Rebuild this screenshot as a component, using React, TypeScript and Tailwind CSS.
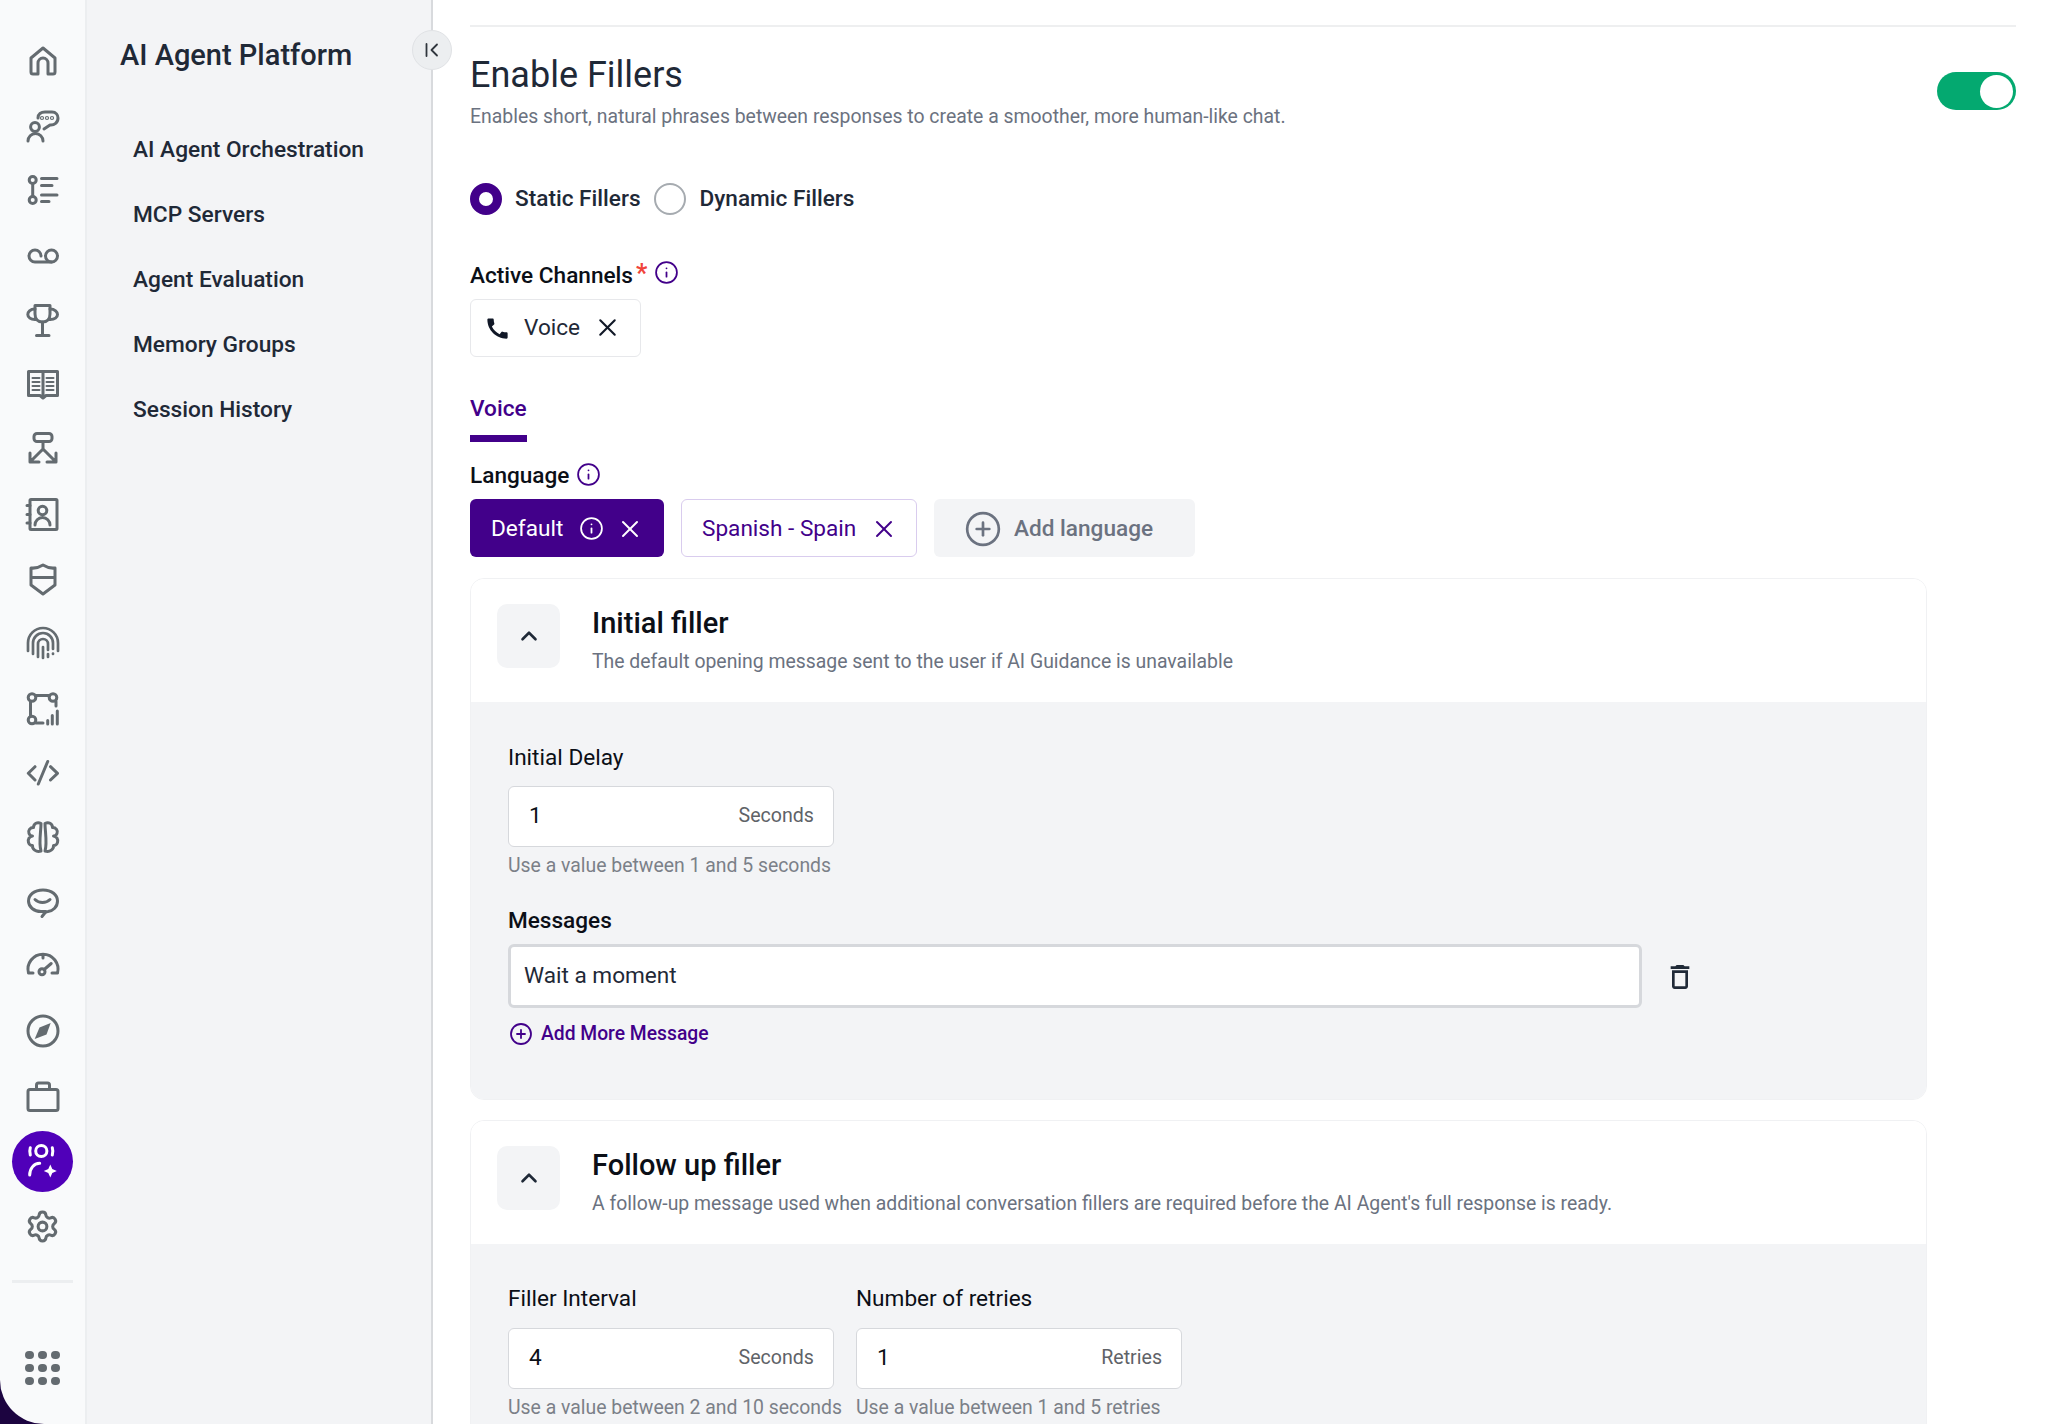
import React from 'react';
import { ChevronUp, CirclePlus, Info, Settings, X } from 'lucide-react';
import { MdCall, MdOutlineDelete } from 'react-icons/md';

const RailSvg = ({ children, stroke = '#646b70' }: { children: React.ReactNode; stroke?: string }) => (
  <svg
    width="32"
    height="32"
    viewBox="0 0 32 32"
    fill="none"
    stroke={stroke}
    strokeWidth="3"
    strokeLinecap="round"
    strokeLinejoin="round"
    style={{ overflow: 'visible' }}
  >
    {children}
  </svg>
);

const railIcons: React.ReactNode[] = [
  <path key="home" d="M4 13 16 3l12 10v14a2 2 0 0 1-2 2h-5V18a5 5 0 0 0-10 0v11H6a2 2 0 0 1-2-2Z" />,
  <g key="agent">
    <circle cx="8" cy="17" r="4.400" />
    <path d="M1 31a7.500 7.500 0 0 1 15 0" />
    <path d="M11 8c0-4 3-6 7-6h7c4 0 6 3 6 6 0 5-4 7-7 7h-1l-6 4" />
    <circle cx="15" cy="8" r="0.600" />
    <circle cx="20" cy="8" r="0.600" />
    <circle cx="25" cy="8" r="0.600" />
  </g>,
  <g key="steps">
    <circle cx="5.700" cy="6" r="3.500" />
    <circle cx="5.700" cy="26" r="3.500" />
    <path d="M5.700 9.500v13M14.500 4.500H30M14.500 11.500H25M14.500 21H30M14.500 27.500H22" />
  </g>,
  <g key="voicemail">
    <circle cx="24.500" cy="17" r="6" />
    <path d="M14 17a6 6 0 1 0-6 6h16.500" />
  </g>,
  <g key="trophy">
    <path d="M8 1.500h15V10c0 5-3 8-7.500 8S8 15 8 10Z" />
    <path d="M8 5C3 5 .8 8 .8 10.500S3.500 16 9 15.500M23 5c5 0 7.500 3 7.500 5.500S28 16 22 15.500M15.500 18v13M9.500 31.500h12.500" />
  </g>,
  <g key="book">
    <path d="M1.500 3.500h29v24H19l-3 2.500-3-2.500H1.500ZM16 3.500v24" />
    <path strokeWidth="2" d="M5.500 10h7M5.500 14h7M5.500 18h7M5.500 22h7M19.500 10h7M19.500 14h7M19.500 18h7M19.500 22h7" />
  </g>,
  <g key="flow">
    <rect x="7" y="0.500" width="18" height="8" rx="3" />
    <path d="M16 8.500V16L3 29M16 16l13 13M3 20v9h9M29 20v9h-9" />
  </g>,
  <g key="contacts">
    <rect x="3" y="1.500" width="27" height="30" rx="1" />
    <circle cx="15.500" cy="12.500" r="4.300" />
    <path d="M8 27a7.500 7.500 0 0 1 15 0M0 7.500h3M0 16.500h3M0 25h3" />
  </g>,
  <path key="shield" d="M4 5c4 .5 8-.5 12-3 4 2.500 8 3.500 12 3v17l-12 9-12-9ZM4 14.500h24" />,
  <g key="fingerprint" strokeWidth="2.700">
    <path d="M1 24v-8a15 15 0 0 1 30 0v8" />
    <path d="M6 27V16a10 10 0 0 1 20 0v6M26 26.500v.5" />
    <path d="M11 30V17a5 5 0 0 1 10 0v6M21 27v3M16 20v11" />
  </g>,
  <g key="graph">
    <circle cx="5" cy="5.500" r="3.800" />
    <circle cx="26" cy="5.500" r="3.800" />
    <circle cx="5" cy="28" r="3.800" />
    <path d="M9 3.500h13M3.500 9.500v14.500M9 31h7M29 9.500V14M20.700 28.500V32M25.300 23.500V32M30.300 19V32" />
  </g>,
  <path key="code" d="M8 9.700 1.300 16.300 8 23M23.500 9.700l7 6.600-7 6.700M20.700 4.500 11.300 27" />,
  <g key="brain">
    <path d="M14 2.500C10.500.5 6.500 2.500 6.500 6.500 3 6.500.8 9.500 2 12.500 2.600 14 4 15 5.500 15 2.500 15.500.5 18 1.500 21.500 2 23.500 3.500 24.500 5.500 24.500 5 28 9 31.500 14 30 11.500 22 14 10 14 2.500Z" />
    <path d="M18 2.500C21.500.5 25.500 2.500 25.500 6.500 29 6.500 31.200 9.500 30 12.500 29.400 14 28 15 26.500 15 29.500 15.500 31.500 18 30.500 21.500 30 23.500 28.500 24.500 26.500 24.500 27 28 23 31.500 18 30 20.500 22 18 10 18 2.500Z" />
  </g>,
  <g key="chat">
    <path d="M16 4C7 4 1.500 9 1.500 15S7 25.500 14 25.500h5L15 30.500c2-3 4-5 6-5 5-.5 9.500-4.500 9.500-10.500S25 4 16 4Z" />
    <path d="M8 13.500c4 4 11 4 15 0" />
  </g>,
  <g key="gauge">
    <path d="M6 22H1.500A15 15 0 1 1 30.500 22H25M16 4v3" />
    <circle cx="15" cy="20.700" r="3" />
    <path d="m17.200 18.500 7-6" />
  </g>,
  <g key="compass">
    <circle cx="16" cy="16" r="15" />
    <path fill="#646b70" stroke="none" d="M23.700 8 19.500 19.500 7.700 24 12.500 12.500Z" />
  </g>,
  <g key="briefcase">
    <rect x="1" y="9.500" width="30" height="21" rx="2" />
    <path d="M9.500 9.500V5a2 2 0 0 1 2-2h9a2 2 0 0 1 2 2v4.500" />
  </g>,
];

const activeIcon = (
  <RailSvg stroke="#ffffff">
    <circle cx="14.300" cy="6" r="5.600" />
    <path d="M3.300 2.700c-.7 2.200-.7 5 0 7.300M25.300 2.700c.7 2.200.7 5 0 7.300M2.700 30c0-6 4-11.700 10-11.700" />
    <path fill="#ffffff" stroke="none" d="m23.300 19.500 2 4.500 4.500 2-4.500 2-2 4.500-2-4.500-4.500-2 4.500-2Z" />
  </RailSvg>
);

const navItems = ['AI Agent Orchestration', 'MCP Servers', 'Agent Evaluation', 'Memory Groups', 'Session History'];

const UnitField = ({
  label,
  value,
  unit,
  hint,
  gapClass = 'mt-[14px]',
}: {
  label: string;
  value: string;
  unit: string;
  hint: string;
  gapClass?: string;
}) => (
  <div className="w-[326px]">
    <div className="text-[22.600px] leading-[28px] text-[#0b0f17]">{label}</div>
    <div className={`${gapClass} flex h-[61px] items-center justify-between rounded-[6px] border border-[#d6d8dc] bg-white pb-[2px] pl-[20px] pr-[19px]`}>
      <span className="text-[22.600px] text-[#0b0f17]">{value}</span>
      <span className="text-[19.600px] text-[#5f6368]">{unit}</span>
    </div>
    <div className="mt-[7px] whitespace-nowrap text-[19.400px] leading-[24px] text-[#7b8088]">{hint}</div>
  </div>
);

const CardHeader = ({ title, desc }: { title: string; desc: string }) => (
  <div className="flex h-[123px] bg-white pl-[26px] pt-[25px]">
    <div className="flex h-[64px] w-[63px] items-center justify-center rounded-[10px] bg-[#f3f4f6]">
      <ChevronUp size={26} strokeWidth={2.4} color="#1f2937" />
    </div>
    <div className="ml-[32px]">
      <div className="mt-[-3px] text-[29px] font-medium leading-[44px] text-[#0b0f17]">{title}</div>
      <div className="mt-[4px] text-[19.400px] leading-[26px] text-[#6b7280]">{desc}</div>
    </div>
  </div>
);

const App = () => {
  return (
    <div className="flex h-[1424px] w-[2048px] overflow-hidden bg-[#1c0440] font-['Roboto',sans-serif]">
      {/* icon rail */}
      <div className="flex w-[87px] shrink-0 flex-col items-center rounded-bl-[44px] border-r-[2px] border-[#eceef0] bg-[#f9fafb] pt-[45px]">
        {railIcons.map((icon, i) => (
          <div key={i} className="mb-[32.700px] flex h-[32px] w-[32px] items-center justify-center">
            <RailSvg>{icon}</RailSvg>
          </div>
        ))}
        <div className="mt-[-14px] flex h-[61px] w-[61px] items-center justify-center rounded-full bg-[#5000b9]">
          {activeIcon}
        </div>
        <div className="mt-[19px] flex h-[32px] w-[32px] items-center justify-center">
          <Settings size={35} strokeWidth={2.100} color="#646b70" className="shrink-0" />
        </div>
        <div className="mt-[37px] h-[3px] w-[61px] bg-[#eceef0]" />
        <div className="mt-[68px] grid grid-cols-3 gap-x-[4.500px] gap-y-[4.500px]">
          {Array.from({ length: 9 }).map((_, i) => (
            <div key={i} className="h-[8.500px] w-[8.500px] rounded-full bg-[#646b70]" />
          ))}
        </div>
      </div>

      {/* sidebar */}
      <div className="relative w-[346px] shrink-0 border-r-[2px] border-[#d8dadd] bg-[#f3f4f6] pl-[33px] pt-[37px]">
        <div className="text-[29px] font-medium leading-[37px] text-[#1f2937]">AI Agent Platform</div>
        <div className="ml-[13px] mt-[44px] flex flex-col">
          {navItems.map((item) => (
            <div key={item} className="flex h-[65px] items-center text-[22.700px] font-medium text-[#1f2937]">
              {item}
            </div>
          ))}
        </div>
        <div className="absolute right-[-21px] top-[30px] flex h-[40px] w-[40px] items-center justify-center rounded-full border border-[#e0e2e5] bg-[#eceef0]">
          <svg width="16" height="16" viewBox="0 0 16 16" fill="none" stroke="#30363d" strokeWidth="1.800" strokeLinecap="round" strokeLinejoin="round">
            <path d="M2.500 2v12M13 2.500 7.500 8l5.500 5.500" />
          </svg>
        </div>
      </div>

      {/* main content */}
      <div className="min-w-0 flex-1 bg-white pl-[37px] pr-[32px] pt-[25px]">
        <div className="h-[2px] bg-[#eeeff0]" />
        <div className="mt-[26px] flex h-[76px] items-center justify-between">
          <div>
            <div className="text-[36px] leading-[44px] text-[#1f2937]">Enable Fillers</div>
            <div className="mt-[7px] text-[19.400px] leading-[26px] text-[#6b7280]">
              Enables short, natural phrases between responses to create a smoother, more human-like chat.
            </div>
          </div>
          <div className="flex h-[38px] w-[79px] items-center justify-end rounded-full bg-[#04a970] pr-[3px]">
            <div className="h-[33px] w-[33px] rounded-full bg-white" />
          </div>
        </div>

        <div className="mt-[54px] flex h-[32px] items-center">
          <div className="h-[32px] w-[32px] rounded-full border-[9px] border-[#42008a] bg-white" />
          <span className="ml-[13px] text-[22.600px] font-medium text-[#1f2937]">Static Fillers</span>
          <div className="ml-[13px] h-[32px] w-[32px] rounded-full border-[2.500px] border-[#a6abb0] bg-white" />
          <span className="ml-[14px] text-[22.600px] font-medium text-[#1f2937]">Dynamic Fillers</span>
        </div>

        <div className="mt-[46px] flex h-[28px] items-center pt-[2px] text-[22.600px] font-medium text-[#0b0f17]">
          Active Channels
          <span className="relative top-[-2px] ml-[3px] text-[25px] font-bold text-[#f0443a]">*</span>
          <Info size={25} strokeWidth={1.7} color="#42008a" className="relative top-[-4px] ml-[7px]" />
        </div>
        <div className="mt-[10px] flex h-[58px] w-[171px] items-center rounded-[6px] border border-[#e7e8eb] pl-[13px]">
          <MdCall size={27} color="#111827" />
          <span className="ml-[13px] text-[22.600px] text-[#1f2937]">Voice</span>
          <X size={29} strokeWidth={1.700} color="#111827" className="relative top-[-1px] ml-[13px]" />
        </div>

        <div className="mt-[38px] w-[57px]">
          <div className="text-[22.600px] font-medium leading-[28px] text-[#42008a]">Voice</div>
          <div className="mt-[12px] h-[7px] bg-[#42008a]" />
        </div>

        <div className="mt-[20px] flex h-[28px] items-center text-[22.600px] font-medium text-[#0b0f17]">
          Language
          <Info size={25} strokeWidth={1.7} color="#42008a" className="relative top-[-2px] ml-[7px]" />
        </div>
        <div className="mt-[9px] flex h-[58px] gap-[17px]">
          <div className="flex w-[194px] items-center rounded-[6px] bg-[#42008a] pl-[21px] pt-[1px] text-white">
            <span className="text-[22.600px]">Default</span>
            <Info size={25} strokeWidth={1.7} className="ml-[16px]" />
            <X size={28} strokeWidth={1.700} className="ml-[12px]" />
          </div>
          <div className="flex w-[236px] items-center rounded-[6px] border border-[#d9ccee] pl-[20px] pt-[1px] text-[#42008a]">
            <span className="text-[22.600px]">Spanish - Spain</span>
            <X size={28} strokeWidth={1.700} className="ml-[14px]" />
          </div>
          <div className="flex w-[261px] items-center rounded-[6px] bg-[#f3f4f6] pl-[30px] pt-[1px] text-[#6b7280]">
            <CirclePlus size={38} strokeWidth={1.700} />
            <span className="ml-[12px] text-[22.600px] font-medium">Add language</span>
          </div>
        </div>

        <div className="mt-[21px] w-[1457px] overflow-hidden rounded-[14px] border border-[#f0f1f3]">
          <CardHeader title="Initial filler" desc="The default opening message sent to the user if AI Guidance is unavailable" />
          <div className="h-[397px] bg-[#f3f4f6] pl-[37px] pt-[42px]">
            <UnitField label="Initial Delay" value="1" unit="Seconds" hint="Use a value between 1 and 5 seconds" />
            <div className="mt-[29px] text-[22.600px] font-medium leading-[28px] text-[#0b0f17]">Messages</div>
            <div className="mt-[9px] flex items-center">
              <div className="flex h-[64px] w-[1134px] items-center rounded-[6px] border-[3px] border-[#d6d8dc] bg-white pl-[13px] text-[22.600px] text-[#1f2937]">
                Wait a moment
              </div>
              <MdOutlineDelete size={32} color="#1f2937" className="ml-[22px] mt-[2px]" />
            </div>
            <div className="ml-[1px] mt-[14px] flex h-[24px] items-center text-[19.300px] font-medium text-[#42008a]">
              <CirclePlus size={24} strokeWidth={1.800} />
              <span className="ml-[8px]">Add More Message</span>
            </div>
          </div>
        </div>

        <div className="mt-[20px] w-[1457px] overflow-hidden rounded-t-[14px] border border-[#f0f1f3]">
          <CardHeader
            title="Follow up filler"
            desc="A follow-up message used when additional conversation fillers are required before the AI Agent's full response is ready."
          />
          <div className="flex h-[200px] gap-[22px] bg-[#f3f4f6] pl-[37px] pt-[41px]">
            <UnitField label="Filler Interval" value="4" unit="Seconds" hint="Use a value between 2 and 10 seconds" gapClass="mt-[15px]" />
            <UnitField label="Number of retries" value="1" unit="Retries" hint="Use a value between 1 and 5 retries" gapClass="mt-[15px]" />
          </div>
        </div>
      </div>
    </div>
  );
};

export default App;
